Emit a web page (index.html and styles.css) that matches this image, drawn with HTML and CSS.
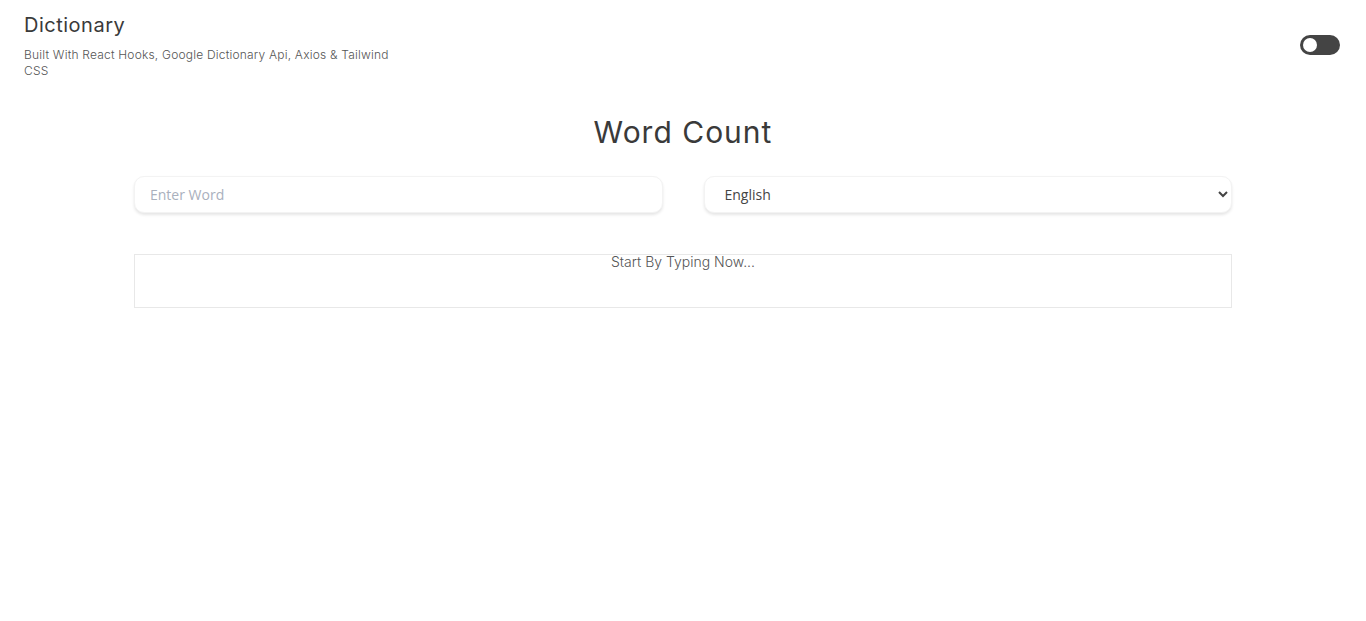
FILE: index.html
```html
<!DOCTYPE html>
<html lang="en">
<head>
<meta charset="utf-8">
<title>Dictionary</title>
<link rel="stylesheet" href="styles.css">
</head>
<body>
<header class="header">
  <div class="brand">
    <h1 class="brand-title">Dictionary</h1>
    <p class="brand-sub">Built With React Hooks, Google Dictionary Api, Axios &amp; Tailwind CSS</p>
  </div>
  <div class="toggle"><span class="knob"></span></div>
</header>
<main class="main">
  <h2 class="page-title">Word Count</h2>
  <div class="controls">
    <input class="field" type="text" placeholder="Enter Word">
    <select class="field select">
      <option>English</option>
    </select>
  </div>
  <div class="result">Start By Typing Now...</div>
</main>
</body>
</html>
```
FILE: styles.css
```css
* { box-sizing: border-box; }
body {
  margin: 0;
  background: #fff;
  font-family: "Inter", "Noto Sans", sans-serif;
  color: #3f3f3f;
}
.header {
  display: flex;
  justify-content: space-between;
  align-items: flex-start;
  padding: 12px 26px 0 24px;
}
.brand { width: 375px; }
.brand-title {
  margin: 0;
  font-size: 20px;
  font-weight: 400;
  line-height: 26px;
  letter-spacing: 0.5px;
  color: #3a3a3a;
}
.brand-sub {
  margin: 9px 0 0;
  font-size: 12px;
  line-height: 16px;
  font-weight: 300;
  letter-spacing: 0.2px;
  color: #555;
}
.toggle {
  margin-top: 23px;
  width: 40px;
  height: 20px;
  border-radius: 10px;
  background: #444;
  display: flex;
  align-items: center;
  padding-left: 3px;
}
.knob {
  width: 14px;
  height: 14px;
  border-radius: 50%;
  background: #fff;
}
.main {
  width: 1098px;
  margin: 0 auto;
}
.page-title {
  margin: 33px 0 0;
  text-align: center;
  font-size: 30px;
  font-weight: 400;
  line-height: 40px;
  letter-spacing: 1px;
  color: #3a3a3a;
}
.controls {
  display: grid;
  grid-template-columns: 1fr 1fr;
  gap: 41px;
  margin-top: 24px;
}
.field {
  height: 37px;
  margin: 0;
  border: 1px solid #f3f3f3;
  border-radius: 10px;
  background: #fff;
  box-shadow: 0 2px 3px rgba(0,0,0,0.1);
  font-family: "Open Sans", sans-serif;
  font-size: 14px;
  padding: 0 15px;
  color: #444;
  outline: none;
}
.field::placeholder { color: #a9b0bd; }
.select { padding-left: 16px; }
.result {
  margin-top: 41px;
  height: 54px;
  border: 1px solid #e8e8e8;
  text-align: center;
  font-size: 14px;
  font-weight: 300;
  line-height: 14px;
  padding-top: 0;
  color: #555;
}
```
